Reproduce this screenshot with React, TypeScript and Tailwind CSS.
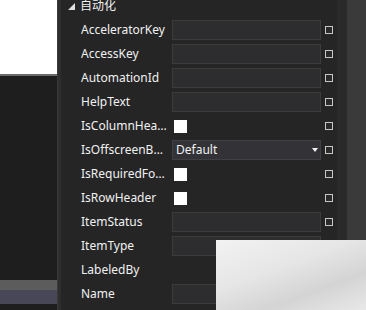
import React from "react";

type Row = { label: string; kind: "text" | "check" | "select" | "none" };

const rows: Row[] = [
  { label: "AcceleratorKey", kind: "text" },
  { label: "AccessKey", kind: "text" },
  { label: "AutomationId", kind: "text" },
  { label: "HelpText", kind: "text" },
  { label: "IsColumnHeader", kind: "check" },
  { label: "IsOffscreenBehavior", kind: "select" },
  { label: "IsRequiredForForm", kind: "check" },
  { label: "IsRowHeader", kind: "check" },
  { label: "ItemStatus", kind: "text" },
  { label: "ItemType", kind: "text" },
  { label: "LabeledBy", kind: "none" },
  { label: "Name", kind: "text" },
];

function Marker() {
  return (
    <div className="w-[8px] h-[8px] border border-[#c8c8c8] bg-[#2a2a2a] shrink-0" />
  );
}

export default function App() {
  return (
    <div
      className="relative w-[366px] h-[310px] overflow-hidden bg-[#252526] flex text-[#f1f1f1]"
      style={{ fontFamily: '"Noto Sans", "Noto Sans CJK SC", sans-serif' }}
    >
      <div className="w-[57px] shrink-0 flex flex-col bg-[#1e1e1e]">
        <div className="h-[74px] bg-white" />
        <div className="h-[2px] bg-[#6a6a6a]" />
        <div className="flex-1" />
        <div className="h-[10px] bg-[#5c5c5c]" />
        <div className="h-[14px] bg-[#474757]" />
        <div className="h-[6px]" />
      </div>
      <div className="w-[4px] shrink-0 bg-[#2e2e2e] border-l border-[#3a3a3a]" />
      <div className="flex-1 flex flex-col">
        <div className="-mt-[6px] h-[24px] flex items-center pl-[7px] gap-[5px] text-[12px] leading-[16px]">
          <svg width="7" height="7" viewBox="0 0 7 7">
            <polygon points="7,0 7,7 0,7" fill="#e0e0e0" />
          </svg>
          <span>自动化</span>
        </div>
        {rows.map((r) => (
          <div key={r.label} className="h-[24px] flex items-center">
            <div className="w-[111px] pl-[20px] pr-[4px] shrink-0 flex">
              <span className="block w-full text-[12px] leading-[16px] truncate">
                {r.label}
              </span>
            </div>
            <div className="w-[149px] h-[20px] shrink-0 flex items-center">
              {r.kind === "text" && (
                <div className="w-full h-full bg-[#2d2d30] border border-[#3c3c3c]" />
              )}
              {r.kind === "check" && (
                <div className="ml-[2px] w-[13px] h-[13px] bg-white" />
              )}
              {r.kind === "select" && (
                <div className="w-full h-full bg-[#333337] border border-[#3f3f46] flex items-center justify-between pl-[3px] pr-[2px]">
                  <span className="text-[12px] leading-[16px]">Default</span>
                  <svg width="6" height="4" viewBox="0 0 6 4">
                    <polygon points="0,0 6,0 3,4" fill="#f1f1f1" />
                  </svg>
                </div>
              )}
            </div>
            <div className="w-[16px] flex justify-center shrink-0">
              <Marker />
            </div>
          </div>
        ))}
      </div>
      <div className="w-[10px] shrink-0 bg-[#2a2a2a]" />
      <div className="w-[19px] shrink-0 bg-[#3a3a3a]" />
      <div
        className="absolute left-[216px] top-[240px] w-[150px] h-[70px]"
        style={{
          background:
            "linear-gradient(160deg, #f2f2f2 0%, #e6e6e6 40%, #d4d4d4 70%, #e8e8e8 100%)",
        }}
      />
    </div>
  );
}
